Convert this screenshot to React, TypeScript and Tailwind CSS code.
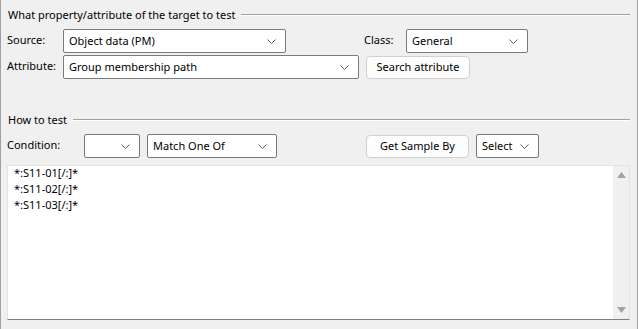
import React from 'react';

function Chevron() {
  return (
    <svg width="9" height="5" viewBox="0 0 9 5" className="shrink-0">
      <path d="M0.5 0.5 L4.5 4.5 L8.5 0.5" fill="none" stroke="#5f5f5f" strokeWidth="1" />
    </svg>
  );
}

function Combo({ value, className }: { value: string; className: string }) {
  return (
    <div
      className={`flex h-[24px] items-center justify-between rounded-[2px] border border-[#7a7a7a] bg-white pl-[5px] pr-[9px] ${className}`}
    >
      <span className="pb-[2px] leading-none">{value}</span>
      <Chevron />
    </div>
  );
}

function Btn({ label, className }: { label: string; className: string }) {
  return (
    <div
      className={`flex h-[23px] items-center justify-center rounded-[4px] border border-[#d0d0d0] bg-[#fdfdfd] pb-[1px] ${className}`}
    >
      {label}
    </div>
  );
}

function GroupHeader({ title, className }: { title: string; className: string }) {
  return (
    <div className={`flex h-[16px] items-center pl-[7px] pr-[7px] ${className}`}>
      <span className="pb-[2px] leading-none">{title}</span>
      <div className="ml-[6px] h-[2px] flex-1 border-t border-[#a0a0a0] border-b border-b-white" />
    </div>
  );
}

export default function App() {
  const lines = ['*:S11-01[/:]*', '*:S11-02[/:]*', '*:S11-03[/:]*'];

  return (
    <div
      className="flex h-[329px] w-[638px] flex-col border-l border-r border-[#a0a0a0] bg-[#f0f0f0] text-[11px] text-black"
      style={{ fontFamily: '"Noto Sans", sans-serif' }}
    >
      <GroupHeader title="What property/attribute of the target to test" className="mt-[7px]" />

      <div className="mt-[6px] flex h-[24px] items-center">
        <span className="w-[62px] pb-[1px] pl-[6px]">Source:</span>
        <Combo value="Object data (PM)" className="w-[223px]" />
        <span className="ml-[78px] w-[42px] pb-[1px]">Class:</span>
        <Combo value="General" className="w-[122px]" />
      </div>

      <div className="mt-[2px] flex h-[24px] items-center">
        <span className="w-[62px] pb-[1px] pl-[6px]">Attribute:</span>
        <Combo value="Group membership path" className="w-[296px]" />
        <Btn label="Search attribute" className="ml-[7px] mt-[1px] w-[104px]" />
      </div>

      <GroupHeader title="How to test" className="mt-[33px]" />

      <div className="mt-[6px] flex h-[24px] items-center">
        <span className="w-[83px] pb-[1px] pl-[6px]">Condition:</span>
        <Combo value="" className="w-[56px]" />
        <Combo value="Match One Of" className="ml-[7px] w-[130px]" />
        <Btn label="Get Sample By" className="ml-[89px] mt-[1px] w-[103px]" />
        <Combo value="Select" className="ml-[7px] w-[63px] pr-[6px]" />
      </div>

      <div className="ml-[6px] mt-[7px] flex h-[155px] w-[623px] border-t border-l border-r border-[#e3e3e3] border-b border-b-[#808080] bg-white">
        <div className="-mt-[1px] flex-1 pl-[6px] leading-[16px]">
          {lines.map((l) => (
            <div key={l}>{l}</div>
          ))}
        </div>
        <div className="flex w-[16px] flex-col items-center justify-between bg-[#f0f0f0] pb-[6px] pt-[6px]">
          <svg width="9" height="6" viewBox="0 0 9 6">
            <path d="M0 6 L4.5 0 L9 6 Z" fill="#a3a3a3" />
          </svg>
          <svg width="9" height="6" viewBox="0 0 9 6">
            <path d="M0 0 L4.5 6 L9 0 Z" fill="#a3a3a3" />
          </svg>
        </div>
      </div>
    </div>
  );
}
